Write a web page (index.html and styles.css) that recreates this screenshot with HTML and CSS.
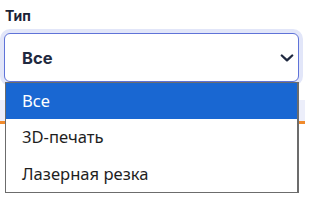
FILE: index.html
```html
<!DOCTYPE html>
<html lang="ru">
<head>
<meta charset="utf-8">
<link rel="stylesheet" href="styles.css">
</head>
<body>
<div class="page">
  <div class="field">
    <label class="label">Тип</label>
    <div class="select">
      <span class="value">Все</span>
      <svg class="chev" width="14" height="8" viewBox="0 0 14 8"><path d="M1.8 1.5 L7 6.3 L12.2 1.5" fill="none" stroke="#1f2940" stroke-width="2.3" stroke-linecap="round" stroke-linejoin="round"/></svg>
    </div>
  </div>
  <div class="tabs"></div>
  <ul class="popup">
    <li class="opt sel">Все</li>
    <li class="opt">3D-печать</li>
    <li class="opt">Лазерная резка</li>
  </ul>
</div>
</body>
</html>
```
FILE: styles.css
```css
html, body { margin: 0; padding: 0; background: #fff; }
body { font-family: Inter, "Noto Sans", sans-serif; }
.page { position: relative; width: 311px; height: 200px; overflow: hidden; }
.field { display: flex; flex-direction: column; padding-top: 6px; }
.label {
  font-size: 14px; line-height: 20px; font-weight: 700; color: #1b2236;
  margin-left: 5px; height: 20px;
}
.select {
  box-sizing: border-box;
  margin: 7px 0 0 4px;
  width: 295px; height: 49px;
  border: 1.5px solid #5f73d8;
  border-radius: 6px;
  box-shadow: 0 0 0 4px #e2e6f9;
  display: flex; align-items: center; justify-content: space-between;
  padding: 0 4px 0 17px;
  background: #fff;
}
.value { font-size: 16.5px; font-weight: 700; color: #1f2940; }
.chev { display: block; margin-top: 1px; }
.tabs {
  margin-top: 18px; width: 305px; height: 21px;
  background: #eceefa; border-bottom: 3px solid #f08a2c;
}
.popup {
  position: absolute; left: 5px; top: 82px;
  width: 294px; box-sizing: border-box;
  margin: 0; padding: 0; list-style: none;
  border: 1px solid #6c6c6c;
  border-right-width: 2px;
  background: #fff;
  font-family: "Noto Sans", "Open Sans", sans-serif;
}
.opt {
  height: 36.3px; line-height: 36px; padding-left: 16px;
  font-size: 16.6px; color: #1e1e1e;
}
.opt.sel { background: #1967d2; color: #fff; }
```
